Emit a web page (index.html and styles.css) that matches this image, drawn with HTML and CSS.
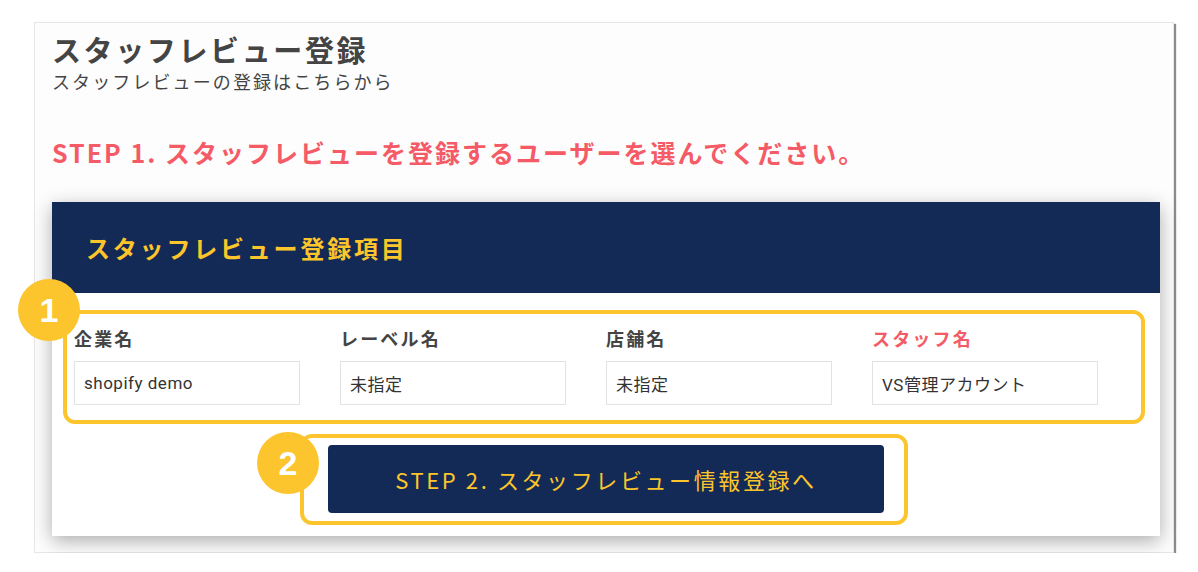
FILE: index.html
```html
<!DOCTYPE html>
<html lang="ja">
<head>
  <meta charset="UTF-8" />
  <title>スタッフレビュー登録</title>
  <link rel="stylesheet" href="styles.css">
</head>
<body>

<div class="frame">
  <h1 class="page-title">スタッフレビュー登録</h1>
  <p class="page-sub">スタッフレビューの登録はこちらから</p>

  <h2 class="step-title">STEP 1. スタッフレビューを登録するユーザーを選んでください。</h2>

  <div class="card">
    <div class="card-head">スタッフレビュー登録項目</div>

    <div class="card-body">
      <!-- select user -->
      <div class="mark-box fields">
        <span class="badge badge-1">1</span>
        <div class="field">
          <label>企業名</label>
          <div class="input">shopify demo</div>
        </div>
        <div class="field">
          <label>レーベル名</label>
          <div class="input">未指定</div>
        </div>
        <div class="field">
          <label>店舗名</label>
          <div class="input">未指定</div>
        </div>
        <div class="field">
          <label class="req">スタッフ名</label>
          <div class="input">VS管理アカウント</div>
        </div>
      </div>

      <!-- next step -->
      <div class="mark-box next">
        <span class="badge badge-2">2</span>
        <button class="next-btn">STEP 2. スタッフレビュー情報登録へ</button>
      </div>
    </div>
  </div>
</div>

</body>
</html>
```

FILE: styles.css
```css
body {
  margin: 0;
  background: #fff;
  font-family: "Noto Sans CJK JP", sans-serif;
  color: #444;
}

.frame {
  margin: 22px 0 0 34px;
  width: 1140px;
  height: 531px;
  box-sizing: border-box;
  padding: 8px 13px 0 17px;
  background: #fdfdfd;
  border: 1px solid #e6e6e6;
  box-shadow: 2px 2px 1px rgba(0, 0, 0, 0.45);
}

.page-title {
  margin: 0;
  font-size: 29px;
  line-height: 37px;
  font-weight: 700;
  letter-spacing: 0.09em;
  color: #444;
}

.page-sub {
  margin: 0;
  font-size: 18px;
  line-height: 26px;
  letter-spacing: 2.1px;
  color: #444;
}

.step-title {
  margin: 41px 0 0;
  font-size: 25px;
  line-height: 34px;
  font-weight: 700;
  letter-spacing: 0.08em;
  color: #f45b66;
}

.card {
  margin-top: 33px;
  background: #fff;
  box-shadow: 0 5px 18px rgba(0, 0, 0, 0.32);
}

.card-head {
  height: 91px;
  display: flex;
  align-items: center;
  padding-left: 34px;
  background: #142a56;
  color: #fbc52b;
  font-size: 24px;
  font-weight: 700;
  letter-spacing: 2.8px;
}

.card-body {
  padding: 17px 15px 11px 11px;
}

.mark-box {
  position: relative;
  border: 4px solid #fcc42d;
  border-radius: 12px;
}

.fields {
  display: flex;
  gap: 40px;
  padding: 12px 0 15px 7px;
}

.field {
  width: 226px;
}

.field label {
  display: block;
  font-size: 18px;
  line-height: 24px;
  font-weight: 700;
  letter-spacing: 0.12em;
  color: #444;
}

.field label.req {
  color: #f45b66;
}

.input {
  margin-top: 11px;
  height: 44px;
  box-sizing: border-box;
  border: 1px solid #e2e2e2;
  background: #fff;
  padding-left: 9px;
  display: flex;
  align-items: center;
  font-family: Roboto, "Noto Sans CJK JP", sans-serif;
  font-size: 17px;
  letter-spacing: 0.03em;
  color: #333;
}

.next {
  width: 608px;
  box-sizing: border-box;
  margin: 10px auto 0;
  padding: 7px 20px 8px 24px;
}

.next-btn {
  display: block;
  width: 100%;
  height: 68px;
  border: none;
  border-radius: 4px;
  background: #142a56;
  color: #fbc52b;
  font-family: "Noto Sans CJK JP", sans-serif;
  font-size: 22px;
  letter-spacing: 2.6px;
  cursor: pointer;
}

.badge {
  position: absolute;
  width: 62px;
  height: 62px;
  border-radius: 50%;
  background: #fcc42d;
  color: #fff;
  font-family: "Liberation Sans", Arial, sans-serif;
  font-weight: 700;
  font-size: 34px;
  display: flex;
  align-items: center;
  justify-content: center;
}

.badge-1 {
  left: -49px;
  top: -35px;
}

.badge-2 {
  left: -47px;
  top: -6px;
}
```
